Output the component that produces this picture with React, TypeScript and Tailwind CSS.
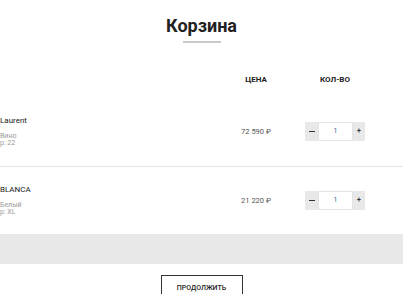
import React from "react";

type Item = { name: string; sub1: string; sub2: string; price: string };

const items: Item[] = [
  { name: "Laurent", sub1: "Вино", sub2: "р: 22", price: "72 590 ₽" },
  { name: "BLANCA", sub1: "Белый", sub2: "р: XL", price: "21 220 ₽" },
];

function Qty() {
  return (
    <div className="flex h-[19px] w-[60px] items-stretch">
      <div className="flex w-[13px] items-center justify-center bg-[#e8e8e8]">
        <div className="h-[1.5px] w-[6px] bg-[#333]" />
      </div>
      <div className="flex flex-1 items-center justify-center border border-[#e4e4e4] bg-white text-[7px] leading-none text-[#3d5f96]">
        1
      </div>
      <div className="flex w-[12px] items-center justify-center bg-[#e8e8e8] text-[7px] font-bold leading-none text-[#333]">
        +
      </div>
    </div>
  );
}

export default function App() {
  return (
    <div
      className="w-[403px] h-[294px] overflow-hidden bg-white"
      style={{ fontFamily: "Roboto, 'Liberation Sans', sans-serif" }}
    >
      <div className="flex flex-col items-center pt-[15px]">
        <h1 className="text-[18px] font-bold leading-[21px] text-[#222]">Корзина</h1>
        <div className="mt-[5px] h-[2px] w-[38px] bg-[#c8c8c8]" />
      </div>

      <div className="mt-[32px] flex pr-[38px] text-[8px] font-bold leading-[10px] text-[#222]">
        <div className="flex-1" />
        <div className="w-[60px] text-center">ЦЕНА</div>
        <div className="ml-[19px] w-[60px] text-center">КОЛ-ВО</div>
      </div>

      <div className="mt-[12px]">
        {items.map((it, i) => (
          <div
            key={it.name}
            className={
              i === 0
                ? "flex h-[70px] items-center border-b border-[#e6e6e6] pr-[38px]"
                : "flex h-[67px] items-center pr-[38px]"
            }
          >
            <div className="flex flex-1 flex-col">
              <div className="text-[8px] leading-[10px] text-[#222]">{it.name}</div>
              <div className="mt-[7px] text-[7px] leading-[7px] text-[#9a9a9a]">{it.sub1}</div>
              <div className="text-[7px] leading-[7px] text-[#9a9a9a]">{it.sub2}</div>
            </div>
            <div className="w-[60px] text-center text-[7.5px] leading-[10px] text-[#555]">{it.price}</div>
            <div className="ml-[19px] w-[60px]">
              <Qty />
            </div>
          </div>
        ))}
      </div>

      <div className="h-[30px] w-full bg-[#e8e8e8]" />

      <div className="mt-[11px] flex justify-center">
        <button className="flex h-[28px] w-[82px] justify-center border border-[#333] bg-white pt-[7px] text-[7px] font-medium uppercase leading-[10px] text-[#222]">
          Продолжить
        </button>
      </div>
    </div>
  );
}
